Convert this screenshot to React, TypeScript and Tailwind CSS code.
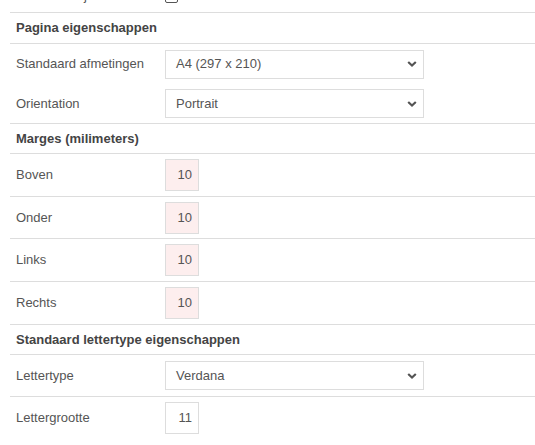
const font = { fontFamily: '"Liberation Sans", Arial, sans-serif' };

function Chevron() {
  return (
    <svg width="10" height="7" viewBox="0 0 10 7" className="absolute right-[6px] top-1/2 -translate-y-1/2">
      <path d="M1.2 1.5 L5 5 L8.8 1.5" fill="none" stroke="#555" strokeWidth="2.2" />
    </svg>
  );
}

function Heading({ title, h }: { title: string; h: string }) {
  return (
    <div className={`flex ${h} items-center border-b border-[#dddddd] pl-[6px] text-[13px] font-bold text-[#444]`}>
      {title}
    </div>
  );
}

function SelectRow({ label, value, h, border = true }: { label: string; value: string; h: string; border?: boolean }) {
  return (
    <div className={`flex ${h} items-center ${border ? "border-b border-[#dddddd]" : ""}`}>
      <div className="w-[155px] pl-[6px] text-[13px] text-[#555]">{label}</div>
      <div className="relative flex h-[29px] w-[259px] items-center border border-[#dddddd] bg-white pl-[10px] text-[13px] text-[#555]">
        {value}
        <Chevron />
      </div>
    </div>
  );
}

function NumberRow({ label, value, h, pink = true, border = true }: { label: string; value: string; h: string; pink?: boolean; border?: boolean }) {
  return (
    <div className={`flex ${h} items-center ${border ? "border-b border-[#dddddd]" : ""}`}>
      <div className="w-[155px] pl-[6px] text-[13px] text-[#555]">{label}</div>
      <div
        className={`flex h-[32px] w-[34px] items-center justify-end border border-[#dddddd] pr-[6px] text-[13px] text-[#555] ${
          pink ? "bg-[#fdeeee]" : "bg-white"
        }`}
      >
        {value}
      </div>
    </div>
  );
}

export default function App() {
  return (
    <div className="h-[445px] w-[535px] overflow-hidden bg-white pl-[10px]" style={font}>
      <div className="-mt-[20px] flex h-[33px] items-center border-b border-[#dddddd]">
        <div className="w-[155px] pl-[6px] text-[13px] text-[#555]">Manueel object</div>
        <div className="h-[13px] w-[13px] rounded-[2px] border border-[#555] bg-white" />
      </div>
      <Heading title="Pagina eigenschappen" h="h-[31px]" />
      <SelectRow label="Standaard afmetingen" value="A4 (297 x 210)" h="h-[40px]" border={false} />
      <SelectRow label="Orientation" value="Portrait" h="h-[40px]" />
      <Heading title="Marges (milimeters)" h="h-[30px]" />
      <NumberRow label="Boven" value="10" h="h-[43px]" />
      <NumberRow label="Onder" value="10" h="h-[42px]" />
      <NumberRow label="Links" value="10" h="h-[43px]" />
      <NumberRow label="Rechts" value="10" h="h-[43px]" />
      <Heading title="Standaard lettertype eigenschappen" h="h-[30px]" />
      <SelectRow label="Lettertype" value="Verdana" h="h-[42px]" />
      <NumberRow label="Lettergrootte" value="11" h="h-[42px]" pink={false} border={false} />
    </div>
  );
}
